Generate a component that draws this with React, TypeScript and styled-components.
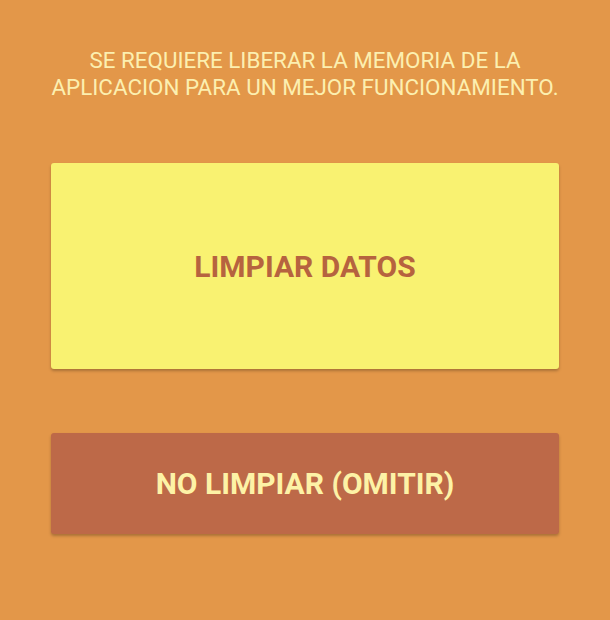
import React from "react";
import styled, { createGlobalStyle } from "styled-components";

const GlobalStyle = createGlobalStyle`
	html, body {
		margin: 0;
		padding: 0;
		background: #e39749;
	}
	* {
		box-sizing: border-box;
	}
`;

const Screen = styled.div`
	width: 610px;
	height: 620px;
	background: #e39749;
	display: flex;
	flex-direction: column;
	align-items: center;
	padding: 47px 51px 0 51px;
	font-family: Roboto, "Liberation Sans", sans-serif;
`;

const Message = styled.p`
	margin: 0;
	color: #fcefb0;
	font-size: 22.4px;
	line-height: 27px;
	text-align: center;
	text-transform: uppercase;
	white-space: nowrap;
`;

const ActionButton = styled.button<{ $tone: "primary" | "secondary"; $height: number }>`
	width: 100%;
	height: ${(props) => props.$height}px;
	border: none;
	border-radius: 3px;
	cursor: pointer;
	font-family: inherit;
	font-weight: 700;
	font-size: 30px;
	background: ${(props) => (props.$tone === "primary" ? "#f9f271" : "#bd6948")};
	color: ${(props) => (props.$tone === "primary" ? "#b6633f" : "#fdf2a6")};
	box-shadow: 0 2px 3px rgba(0, 0, 0, 0.25);
`;

const Actions = styled.div`
	width: 100%;
	display: flex;
	flex-direction: column;
	gap: 64px;
	margin-top: 62px;
`;

function App() {
	return (
		<>
			<GlobalStyle />
			<Screen>
				<Message>
					Se requiere liberar la memoria de la
					<br />
					aplicacion para un mejor funcionamiento.
				</Message>
				<Actions>
					<ActionButton $tone="primary" $height={206}>
						LIMPIAR DATOS
					</ActionButton>
					<ActionButton $tone="secondary" $height={101}>
						NO LIMPIAR (OMITIR)
					</ActionButton>
				</Actions>
			</Screen>
		</>
	);
}

export default App;
